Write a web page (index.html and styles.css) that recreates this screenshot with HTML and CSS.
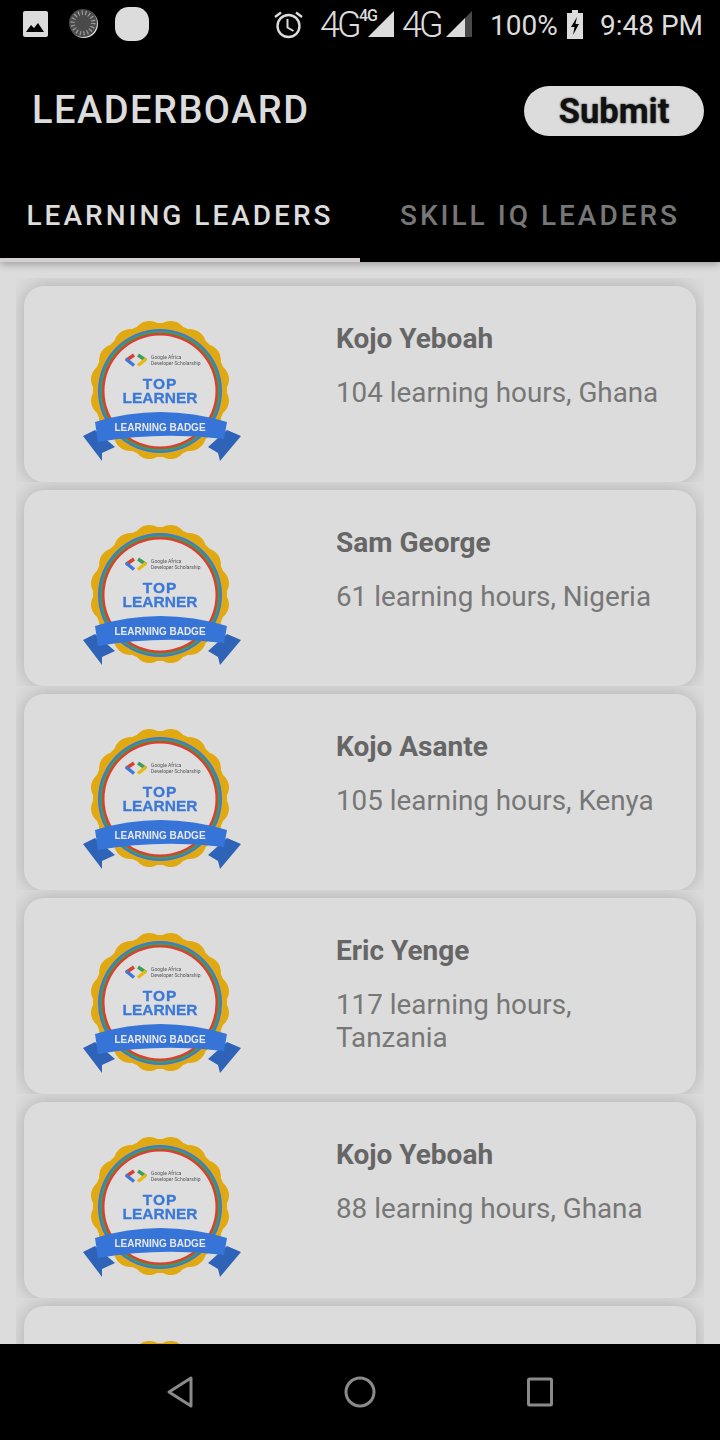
FILE: index.html
```html
<!DOCTYPE html>
<html lang="en">

<head>
    <meta charset="UTF-8">
    <meta name="viewport" content="width=device-width, initial-scale=1.0">
    <title>Leaderboard</title>
    <link rel="stylesheet" href="styles.css">
</head>

<body>
    <svg class="defs" width="0" height="0">
        <symbol id="badge-art" viewBox="0 0 180 160">
            <path d="M90 15A16 16 0 0 1 114.900 19.950A16 16 0 0 1 135.960 34.040A16 16 0 0 1 150.050 55.100A16 16 0 0 1 155 80A16 16 0 0 1 150.050 104.900A16 16 0 0 1 135.960 125.960A16 16 0 0 1 114.900 140.050A16 16 0 0 1 90 145A16 16 0 0 1 65.100 140.050A16 16 0 0 1 44.040 125.960A16 16 0 0 1 29.950 104.900A16 16 0 0 1 25 80A16 16 0 0 1 29.950 55.100A16 16 0 0 1 44.040 34.040A16 16 0 0 1 65.100 19.950A16 16 0 0 1 90 15z" fill="#e1a911"/>
            <circle cx="90" cy="80" r="67" fill="#e1a911"/>
            <circle cx="90" cy="81" r="62" fill="#3f78d6"/>
            <circle cx="90" cy="81" r="60" fill="#3f9c5a"/>
            <circle cx="90" cy="81" r="58" fill="#d9402f"/>
            <circle cx="90" cy="81" r="55.500" fill="#dedede"/>
            <path d="M64 45l-8 5.500" fill="none" stroke="#d9402f" stroke-width="3.500"/>
            <path d="M56 49l8 6.500" fill="none" stroke="#3f78d6" stroke-width="3.500"/>
            <path d="M68 45l8 5.500" fill="none" stroke="#3f9c5a" stroke-width="3.500"/>
            <path d="M76 49l-8 6.500" fill="none" stroke="#e9b90f" stroke-width="3.500"/>
            <path d="M13 126l12-6 20 17-13 6v8z" fill="#2f63b8"/>
            <path d="M171 126l-14-6-19 17 10 6 2 8z" fill="#2f63b8"/>
            <path d="M25 112Q90 92 157 112L154 129Q90 121 28 132z" fill="#3674d8"/>
        </symbol>
    </svg>

    <div id="main">
        <div class="statusbar">
            <svg width="25" height="26" viewBox="0 0 25 26"><rect width="25" height="26" rx="2" fill="#dcdcdc"/><path d="M3 21l5-7 3 3 4-5 6 9z" fill="#000"/></svg>
            <svg class="ic-dial" width="30" height="30" viewBox="0 0 30 30">
                <circle cx="15" cy="15" r="14" fill="#dcdcdc"/>
                <circle cx="14" cy="14" r="14" fill="#4a4a4a"/>
                <circle cx="14" cy="14" r="10" fill="none" stroke="#9a9a9a" stroke-width="5" stroke-dasharray="1.200 2.300"/>
                <circle cx="14" cy="14" r="8" fill="#4a4a4a"/>
            </svg>
            <span class="ic-blob"></span>
            <span class="status-gap"></span>
            <svg width="29" height="29" viewBox="0 0 29 29"><circle cx="14.500" cy="16" r="11" fill="none" stroke="#dcdcdc" stroke-width="2.400"/><path d="M13.500 9v8.500l6 3.500" fill="none" stroke="#dcdcdc" stroke-width="2"/><path d="M1 7l6-4.500M28 7l-6-4.500" stroke="#dcdcdc" stroke-width="2.400"/></svg>
            <span class="st-4g st-4g-a">4G</span>
            <span class="st-sup">4G</span>
            <svg class="ic-signal-a" width="26" height="26" viewBox="0 0 26 26"><path d="M26 0v26H0z" fill="#dcdcdc"/></svg>
            <span class="st-4g st-4g-b">4G</span>
            <svg class="ic-signal-b" width="26" height="26" viewBox="0 0 26 26"><path d="M26 0v26H19V7z" fill="#4a4a4a"/><path d="M19 7v19H0z" fill="#dcdcdc"/></svg>
            <span class="st-text st-pct">100%</span>
            <svg class="ic-batt" width="16" height="29" viewBox="0 0 16 29"><path d="M5 0h6v3h5v26H0V3h5z" fill="#dcdcdc"/><path d="M10 7l-6 10h3.500l-1.500 8 6-11H8.500z" fill="#000"/></svg>
            <span class="st-text st-time">9:48 PM</span>
        </div>

        <header class="appbar">
            <h1 class="title">LEADERBOARD</h1>
            <button class="submit">Submit</button>
        </header>

        <div class="tabs">
            <div class="tab active">LEARNING LEADERS</div>
            <div class="tab">SKILL IQ LEADERS</div>
        </div>

        <div class="list">
            <div class="item">
                <div class="card">
                    <svg class="badge" viewBox="0 0 180 160">
                        <use href="#badge-art" width="180" height="160"/>
                        <text x="81" y="49" class="badge-small">Google Africa</text>
                        <text x="81" y="55" class="badge-small">Developer Scholarship</text>
                        <text x="90" y="79" class="badge-big badge-top">TOP</text>
                        <text x="90" y="93" class="badge-big">LEARNER</text>
                        <text x="90" y="121" class="badge-label">LEARNING BADGE</text>
                    </svg>
                    <div class="info">
                        <div class="name">Kojo Yeboah</div>
                        <div class="hours">104 learning hours, Ghana</div>
                    </div>
                </div>
            </div>
            <div class="item">
                <div class="card">
                    <svg class="badge" viewBox="0 0 180 160">
                        <use href="#badge-art" width="180" height="160"/>
                        <text x="81" y="49" class="badge-small">Google Africa</text>
                        <text x="81" y="55" class="badge-small">Developer Scholarship</text>
                        <text x="90" y="79" class="badge-big badge-top">TOP</text>
                        <text x="90" y="93" class="badge-big">LEARNER</text>
                        <text x="90" y="121" class="badge-label">LEARNING BADGE</text>
                    </svg>
                    <div class="info">
                        <div class="name">Sam George</div>
                        <div class="hours">61 learning hours, Nigeria</div>
                    </div>
                </div>
            </div>
            <div class="item">
                <div class="card">
                    <svg class="badge" viewBox="0 0 180 160">
                        <use href="#badge-art" width="180" height="160"/>
                        <text x="81" y="49" class="badge-small">Google Africa</text>
                        <text x="81" y="55" class="badge-small">Developer Scholarship</text>
                        <text x="90" y="79" class="badge-big badge-top">TOP</text>
                        <text x="90" y="93" class="badge-big">LEARNER</text>
                        <text x="90" y="121" class="badge-label">LEARNING BADGE</text>
                    </svg>
                    <div class="info">
                        <div class="name">Kojo Asante</div>
                        <div class="hours">105 learning hours, Kenya</div>
                    </div>
                </div>
            </div>
            <div class="item">
                <div class="card">
                    <svg class="badge" viewBox="0 0 180 160">
                        <use href="#badge-art" width="180" height="160"/>
                        <text x="81" y="49" class="badge-small">Google Africa</text>
                        <text x="81" y="55" class="badge-small">Developer Scholarship</text>
                        <text x="90" y="79" class="badge-big badge-top">TOP</text>
                        <text x="90" y="93" class="badge-big">LEARNER</text>
                        <text x="90" y="121" class="badge-label">LEARNING BADGE</text>
                    </svg>
                    <div class="info">
                        <div class="name">Eric Yenge</div>
                        <div class="hours">117 learning hours, Tanzania</div>
                    </div>
                </div>
            </div>
            <div class="item">
                <div class="card">
                    <svg class="badge" viewBox="0 0 180 160">
                        <use href="#badge-art" width="180" height="160"/>
                        <text x="81" y="49" class="badge-small">Google Africa</text>
                        <text x="81" y="55" class="badge-small">Developer Scholarship</text>
                        <text x="90" y="79" class="badge-big badge-top">TOP</text>
                        <text x="90" y="93" class="badge-big">LEARNER</text>
                        <text x="90" y="121" class="badge-label">LEARNING BADGE</text>
                    </svg>
                    <div class="info">
                        <div class="name">Kojo Yeboah</div>
                        <div class="hours">88 learning hours, Ghana</div>
                    </div>
                </div>
            </div>
            <!-- only the top of this one is on screen -->
            <div class="item">
                <div class="card">
                    <svg class="badge" viewBox="0 0 180 160">
                        <use href="#badge-art" width="180" height="160"/>
                    </svg>
                </div>
            </div>
        </div>

        <nav class="navbar">
            <svg width="26" height="32" viewBox="0 0 26 32"><path d="M24 2v28L2 16z" fill="none" stroke="#8a8a8a" stroke-width="3" stroke-linejoin="round"/></svg>
            <svg width="32" height="32" viewBox="0 0 32 32"><circle cx="16" cy="16" r="14" fill="none" stroke="#8a8a8a" stroke-width="3"/></svg>
            <svg width="26" height="30" viewBox="0 0 26 30"><rect x="1.500" y="2" width="23" height="26" rx="1" fill="none" stroke="#8a8a8a" stroke-width="3"/></svg>
        </nav>
    </div>
</body>

</html>
```

FILE: styles.css
```css
* {
    margin: 0;
    padding: 0;
    box-sizing: border-box;
    font-family: Roboto, "Liberation Sans", sans-serif;
}

body {
    background-color: #000;
}

.defs {
    display: block;
    height: 0;
}

#main {
    display: flex;
    flex-direction: column;
    width: 720px;
    height: 1440px;
    overflow: hidden;
    background-color: #dcdcdc;
}

/* status bar */
.statusbar {
    display: flex;
    align-items: center;
    flex-shrink: 0;
    height: 48px;
    padding: 0 17px 0 23px;
    background-color: #000;
    color: #dcdcdc;
    white-space: nowrap;
}

.ic-dial {
    margin-left: 21px;
}

.ic-blob {
    width: 34px;
    height: 34px;
    margin-left: 16px;
    border-radius: 40%;
    background-color: #dcdcdc;
}

.status-gap {
    flex: 1;
}

.st-text {
    margin-top: 4px;
    font-size: 28px;
    line-height: 48px;
}

.st-4g {
    width: 38px;
    margin-top: 2px;
    font-size: 36px;
    font-weight: 300;
    letter-spacing: -3px;
    line-height: 48px;
}

.st-4g-a {
    margin-left: 17px;
}

.st-sup {
    align-self: flex-start;
    width: 17px;
    margin: 7px 0 0 1px;
    font-size: 16px;
    font-weight: 500;
    letter-spacing: -1px;
    line-height: 18px;
}

.ic-signal-a {
    margin-left: -8px;
}

.st-4g-b {
    margin-left: 8px;
}

.ic-signal-b {
    margin-left: 6px;
}

.st-pct {
    width: 67px;
    margin-left: 18px;
}

.ic-batt {
    margin-left: 10px;
}

.st-time {
    width: 103px;
    margin-left: 17px;
}

/* app bar */
.appbar {
    display: flex;
    align-items: center;
    justify-content: space-between;
    flex-shrink: 0;
    height: 122px;
    padding: 2px 16px 0 32px;
    background-color: #000;
}

.title {
    color: #dcdcdc;
    font-size: 38px;
    font-weight: 500;
    letter-spacing: 1.500px;
}

.submit {
    width: 180px;
    height: 50px;
    margin-top: 2px;
    border: none;
    border-radius: 25px;
    background-color: #dcdcdc;
    color: #111;
    font-size: 34.500px;
    font-weight: 700;
    text-shadow: 0 0 2px #333;
}

/* tabs */
.tabs {
    display: flex;
    flex-shrink: 0;
    height: 92px;
    background-color: #000;
    box-shadow: 0 2px 8px rgba(0, 0, 0, 0.3);
    position: relative;
    z-index: 1;
}

.tab {
    display: flex;
    align-items: center;
    justify-content: center;
    flex: 1;
    padding-top: 2px;
    border-bottom: 4px solid transparent;
    color: #777;
    font-size: 28px;
    font-weight: 500;
    letter-spacing: 3px;
}

.tab.active {
    border-bottom-color: #d5cfcf;
    color: #dcdcdc;
}

/* list */
.list {
    flex: 1;
    min-height: 0;
    overflow: hidden;
    padding: 16px 16px 0;
}

.item {
    height: 204px;
    padding: 8px 8px 0;
    overflow: hidden;
}

.card {
    display: flex;
    height: 196px;
    padding: 24px 0 0 46px;
    border-radius: 20px;
    background-color: #dcdcdc;
    box-shadow: 0 0 20px rgba(0, 0, 0, 0.22);
}

.badge {
    flex-shrink: 0;
    width: 180px;
    height: 160px;
    filter: blur(0.5px);
}

.info {
    margin-left: 86px;
    padding-right: 24px;
}

.name {
    margin-top: 12px;
    color: #666;
    font-size: 28px;
    font-weight: 700;
    line-height: 34px;
}

.hours {
    margin-top: 20px;
    color: #777;
    font-size: 27.800px;
    line-height: 33px;
}

.badge-small {
    fill: #555;
    font-size: 5px;
}

.badge-big {
    fill: #3b78d8;
    stroke: #3b78d8;
    stroke-width: 0.3px;
    font-family: "Liberation Sans", sans-serif;
    font-size: 15.500px;
    font-weight: 700;
    text-anchor: middle;
}

.badge-top {
    letter-spacing: 1px;
}

.badge-label {
    fill: #e8e8e8;
    font-family: "Liberation Sans", sans-serif;
    font-size: 10px;
    font-weight: 700;
    text-anchor: middle;
}

/* bottom nav */
.navbar {
    display: flex;
    align-items: center;
    justify-content: space-between;
    flex-shrink: 0;
    height: 96px;
    padding: 0 167px;
    background-color: #000;
}
```
